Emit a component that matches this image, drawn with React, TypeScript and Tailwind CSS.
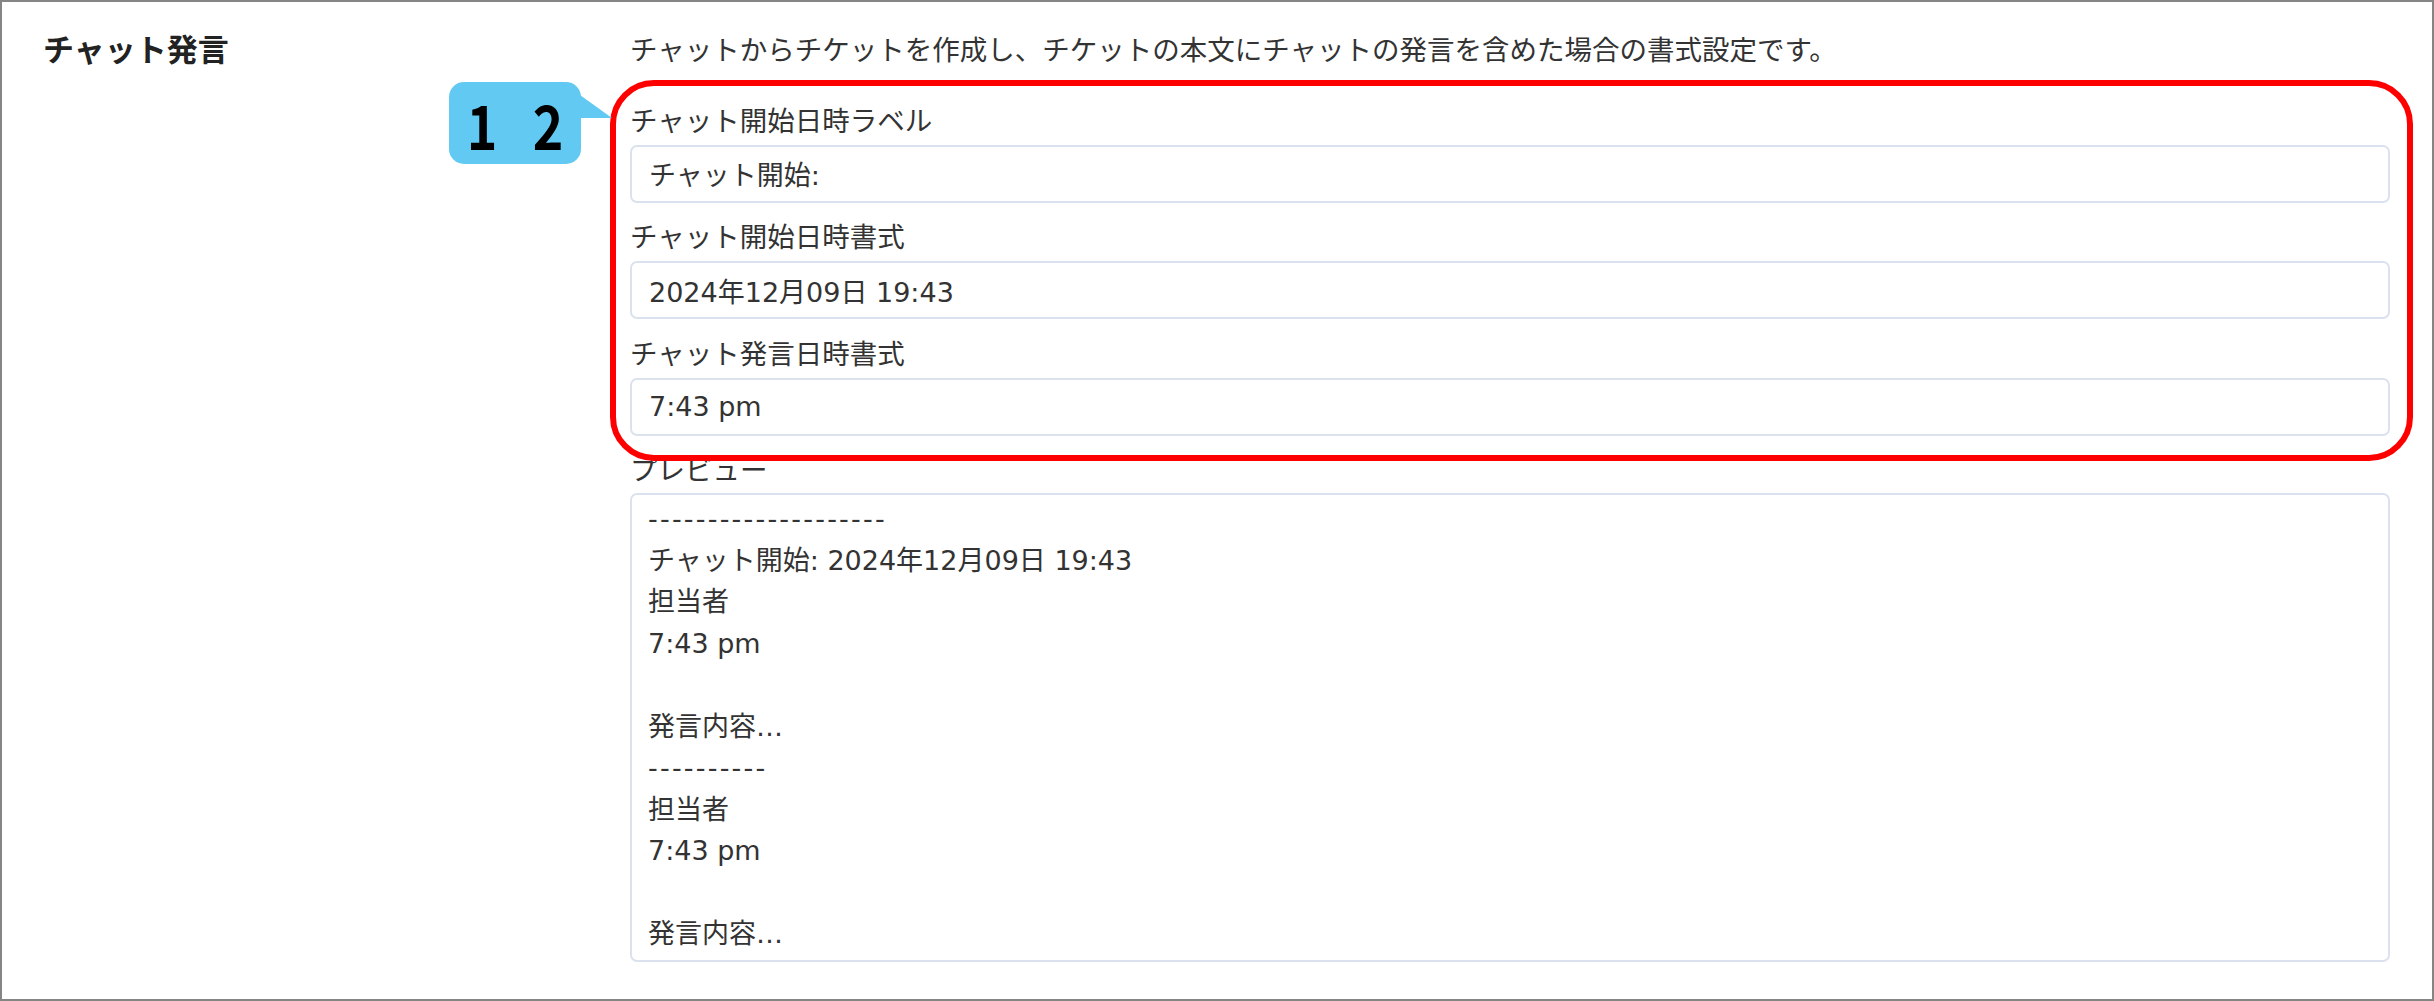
const font = { fontFamily: '"DejaVu Sans", "Noto Sans CJK JP", sans-serif' }

const fields = [
  { label: 'チャット開始日時ラベル', value: 'チャット開始:' },
  { label: 'チャット開始日時書式', value: '2024年12月09日 19:43' },
  { label: 'チャット発言日時書式', value: '7:43 pm' },
]

const preview = [
  '--------------------',
  'チャット開始: 2024年12月09日 19:43',
  '担当者',
  '7:43 pm',
  '',
  '発言内容…',
  '----------',
  '担当者',
  '7:43 pm',
  '',
  '発言内容…',
]

function Field({ label, value }: { label: string; value: string }) {
  return (
    <div className="mb-[14.5px]">
      <div className="leading-[41px] mb-[3px]">{label}</div>
      <input
        readOnly
        value={value}
        className="w-full h-[58px] px-[17px] border-2 border-[#dbe2ee] rounded-[7px] bg-white text-[27px] text-[#333] outline-none"
      />
    </div>
  )
}

export default function App() {
  return (
    <div
      className="relative w-full h-[1001px] border-2 border-[#858585] bg-white text-[#333] flex overflow-hidden"
      style={font}
    >
      <div className="w-[628px] shrink-0 pl-[41px] pt-[26px]">
        <h2 className="text-[31px] font-bold leading-[45px] text-[#222]">チャット発言</h2>
      </div>

      <div className="flex-1 pr-[42px] pt-[28px] text-[27.5px]">
        <p className="leading-[40.5px] mb-[30px]">
          チャットからチケットを作成し、チケットの本文にチャットの発言を含めた場合の書式設定です。
        </p>

        {fields.map((f) => (
          <Field key={f.label} label={f.label} value={f.value} />
        ))}

        <div className="leading-[41px] mb-[2px]">プレビュー</div>
        <div className="h-[469px] border-2 border-[#dbe2ee] rounded-[7px] px-[16px] pt-[3px] text-[27px] leading-[41.5px] bg-white">
          {preview.map((line, i) => (
            <div
              key={i}
              className={line.startsWith('-') ? 'h-[41.5px] whitespace-pre tracking-[2.2px]' : 'h-[41.5px] whitespace-pre'}
            >
              {line}
            </div>
          ))}
        </div>
      </div>

      {/* annotation overlay */}
      <div className="absolute left-[608px] top-[78px] w-[1803px] h-[381px] border-[6px] border-[#ff0000] rounded-[44px] pointer-events-none" />
      <div
        className="absolute left-[447px] top-[80px] w-[132px] h-[82px] rounded-[15px] bg-[#62c9f2] flex items-center justify-center gap-[30px] text-[61px] font-bold leading-none text-black"
        style={{ fontFamily: '"Noto Sans CJK JP", sans-serif' }}
      >
        <span className="inline-block scale-x-[0.85]">1</span>
        <span className="inline-block scale-x-[0.85]">2</span>
      </div>
      <svg className="absolute left-[570px] top-[90px]" width="42" height="30" viewBox="0 0 42 30">
        <polygon points="0,3 8,3 40,26 0,26" fill="#62c9f2" />
      </svg>
    </div>
  )
}
